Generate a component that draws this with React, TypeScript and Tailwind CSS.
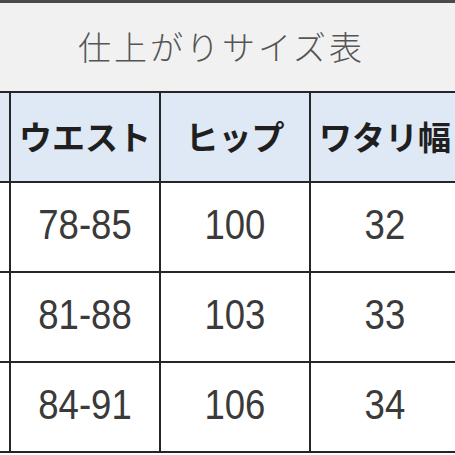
import * as React from 'react'

const rows = [
  ['78-85', '100', '32'],
  ['81-88', '103', '33'],
  ['84-91', '106', '34'],
]

const headers = ['ウエスト', 'ヒップ', 'ワタリ幅']

const jp = { fontFamily: '"Noto Sans CJK JP", "Noto Sans", sans-serif' }
const num = { fontFamily: '"Liberation Sans", sans-serif' }

export default function App() {
  return (
    <div className="w-[455px] h-[455px] overflow-hidden bg-white">
      {/* title */}
      <div className="h-[3px] bg-[#4a4a4a]" />
      <div
        className="h-[88px] bg-[#f1f1f1] flex items-center justify-center pr-[12px] text-[33px] tracking-[3px] text-[#555] font-light"
        style={jp}
      >
        仕上がりサイズ表
      </div>

      {/* table */}
      <div className="border-t-2 border-[#262626]">
        <div className="flex h-[90px] border-b-2 border-[#262626] bg-[#dfe8f5]">
          <div className="w-[9px] shrink-0" />
          {headers.map((h) => (
            <div
              key={h}
              className="w-[150px] shrink-0 border-l-2 border-[#262626] flex items-center justify-center text-[33px] font-bold text-[#1f1f1f] whitespace-nowrap"
              style={jp}
            >
              {h}
            </div>
          ))}
        </div>
        {rows.map((r) => (
          <div key={r[0]} className="flex h-[90px] border-b-2 border-[#262626]">
            <div className="w-[9px] shrink-0" />
            {r.map((v, i) => (
              <div
                key={i}
                className="w-[150px] shrink-0 border-l-2 border-[#262626] flex items-center justify-center pb-[6px] text-[43px] text-[#3a3a3a]"
                style={num}
              >
                <span className="inline-block scale-x-85">{v}</span>
              </div>
            ))}
          </div>
        ))}
      </div>
    </div>
  )
}
